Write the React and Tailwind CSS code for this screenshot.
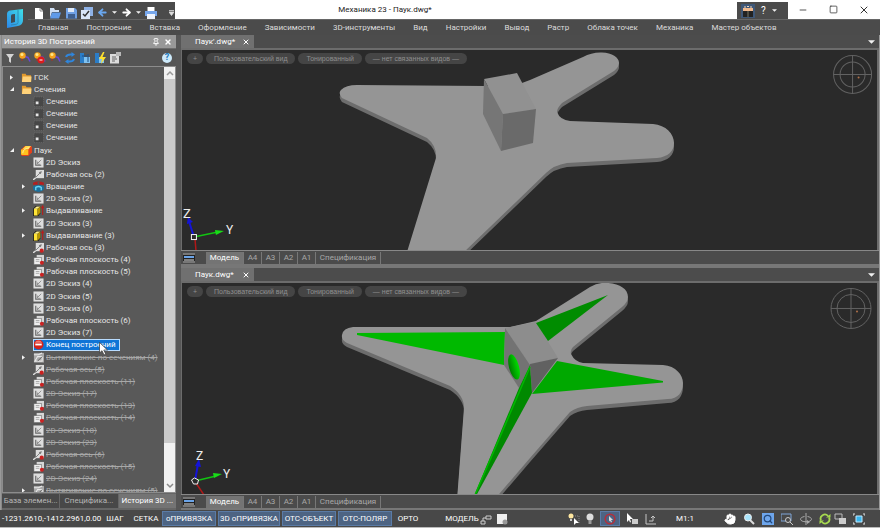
import { ArrowLeft, ArrowRight, Hand, Minus, Pin, Search, Square, X } from 'lucide-react'

const MENU = [
  'Главная', 'Построение', 'Вставка', 'Оформление', 'Зависимости', '3D-инструменты', 'Вид',
  'Настройки', 'Вывод', 'Растр', 'Облака точек', 'Механика', 'Мастер объектов',
]

const TREE = [
  { icon: 'folder', label: 'ГСК', level: 0, arrow: 'closed' },
  { icon: 'folder', label: 'Сечения', level: 0, arrow: 'open' },
  { icon: 'section', label: 'Сечение' },
  { icon: 'section', label: 'Сечение' },
  { icon: 'section', label: 'Сечение' },
  { icon: 'section', label: 'Сечение' },
  { icon: 'part', label: 'Паук', level: 0, arrow: 'open' },
  { icon: 'sketch', label: '2D Эскиз' },
  { icon: 'axis', label: 'Рабочая ось (2)' },
  { icon: 'revolve', label: 'Вращение', arrow: 'closed' },
  { icon: 'sketch', label: '2D Эскиз (2)' },
  { icon: 'extrude', label: 'Выдавливание', arrow: 'closed' },
  { icon: 'sketch', label: '2D Эскиз (3)' },
  { icon: 'extrude', label: 'Выдавливание (3)', arrow: 'closed' },
  { icon: 'axisRed', label: 'Рабочая ось (3)' },
  { icon: 'plane', label: 'Рабочая плоскость (4)' },
  { icon: 'plane', label: 'Рабочая плоскость (5)' },
  { icon: 'sketch', label: '2D Эскиз (4)' },
  { icon: 'sketch', label: '2D Эскиз (5)' },
  { icon: 'sketch', label: '2D Эскиз (6)' },
  { icon: 'plane', label: 'Рабочая плоскость (6)' },
  { icon: 'sketch', label: '2D Эскиз (7)' },
  { icon: 'stop', label: 'Конец построений', selected: true },
  { icon: 'loft', label: 'Вытягивание по сечениям (4)', arrow: 'closed', off: true },
  { icon: 'axisRed', label: 'Рабочая ось (5)', off: true },
  { icon: 'plane', label: 'Рабочая плоскость (11)', off: true },
  { icon: 'sketch', label: '2D Эскиз (17)', off: true },
  { icon: 'plane', label: 'Рабочая плоскость (13)', off: true },
  { icon: 'plane', label: 'Рабочая плоскость (14)', off: true },
  { icon: 'sketch', label: '2D Эскиз (18)', off: true },
  { icon: 'sketch', label: '2D Эскиз (23)', off: true },
  { icon: 'axisRed', label: 'Рабочая ось (6)', off: true },
  { icon: 'plane', label: 'Рабочая плоскость (15)', off: true },
  { icon: 'sketch', label: '2D Эскиз (24)', off: true },
  { icon: 'loft', label: 'Вытягивание по сечениям (5)', arrow: 'closed', off: true },
]

const SHEETS = [
  { name: 'Модель', width: 'w-[38px] bg-[#747474] text-white' },
  { name: 'A4', width: 'w-[18px]' },
  { name: 'A3', width: 'w-[18px]' },
  { name: 'A2', width: 'w-[18px]' },
  { name: 'A1', width: 'w-[18px]' },
  { name: 'Спецификация', width: 'w-[65px]' },
]

const MODES = [
  { name: 'оПРИВЯЗКА', width: 'w-[54px]' },
  { name: '3D оПРИВЯЗКА', width: 'w-[62px]' },
  { name: 'ОТС-ОБЪЕКТ', width: 'w-[54px]' },
  { name: 'ОТС-ПОЛЯР', width: 'w-[54px]' },
]

function Svg({ children, className = 'w-3 h-3', box = '0 0 12 12' }) {
  return <svg viewBox={box} className={`${className} shrink-0`} fill="none">{children}</svg>
}

function TreeIcon({ name }) {
  const cls = 'w-[11px] h-[11px]'
  switch (name) {
    case 'folder':
      return (
        <Svg className={cls}>
          <path d="M1 2h4l1 1.5h5V11H1z" fill="#e39a2d" />
          <path d="M2 5h9.5L11 11H1z" fill="#ffd27a" />
        </Svg>
      )
    case 'section':
      return (
        <Svg className={cls}>
          <rect x="1" y="1" width="10.5" height="10.5" fill="#474747" stroke="#777" strokeDasharray="1.5 1" strokeWidth=".6" />
          <rect x="3" y="6" width="3" height="3" fill="#e6e6e6" />
        </Svg>
      )
    case 'part':
      return (
        <Svg className={cls}>
          <path d="M0 5l4-4h7l1 1v6l-4 4H1l-1-1z" fill="#e2401c" />
          <path d="M1 5l4-4h6L8 5z" fill="#ffd84a" />
          <path d="M0 5h8v6H1l-1-1z" fill="#ffc21e" />
          <path d="M2 9c0-4 3-5 7-6" stroke="#fff3a0" />
        </Svg>
      )
    case 'axis':
    case 'axisRed':
      return (
        <Svg className={cls}>
          <path d="M3 1h9v9H3z" fill="#ddd" />
          <path d="M2 10l7-7M9 3L6.500 4M9 3l-1 2.500" stroke="#777" />
          <path d="M0 12l3-2.500" stroke="#ddd" strokeWidth="1.500" />
          {name === 'axisRed' && <circle cx="9.500" cy="9.500" r="2.300" fill="#c92020" />}
        </Svg>
      )
    case 'plane':
      return (
        <Svg className={cls}>
          <rect x="4" y="1" width="8" height="7" fill="#d6d6d6" />
          <rect x="1" y="4" width="8" height="7.500" fill="#eee" stroke="#666" strokeWidth=".6" />
          <path d="M3 6h4M3 8h4" stroke="#888" strokeWidth=".7" />
          <circle cx="9.700" cy="9.500" r="2.200" fill="#cc2222" />
        </Svg>
      )
    case 'sketch':
      return (
        <Svg className={cls}>
          <rect x=".5" y=".5" width="11" height="11" fill="#dedede" />
          <path d="M3 3v6h6" stroke="#6a6a6a" strokeWidth="1.300" />
          <path d="M4 8l5-5M5 5v3h3" stroke="#8a8a8a" />
        </Svg>
      )
    case 'revolve':
      return (
        <Svg className={cls}>
          <path d="M0 2q6-3 12 0v2H0z" fill="#b51f1f" />
          <path d="M0 6q6-4 12 0v3q-2 3-6 3T0 9z" fill="#1b6f9b" />
          <path d="M3 10V7q3-2 6 0v3" stroke="#66d4f2" strokeWidth="1.500" />
          <rect x="5" y="1" width="2" height="3" fill="#555" />
        </Svg>
      )
    case 'extrude':
      return (
        <Svg className={cls}>
          <path d="M0 4l3-3h5v8l-2 3H0z" fill="#1e1e1e" />
          <path d="M1 4h4v7.500H1z" fill="#ffe437" />
          <path d="M1 4l3-2.500h4L5 4z" fill="#fff08a" />
          <path d="M5 4l3-2.500v7L5 11.500z" fill="#b89600" />
          <path d="M10.500 11V2M9 3.500L10.500 1 12 3.500" stroke="#b32020" strokeWidth="1.200" />
        </Svg>
      )
    case 'stop':
      return (
        <Svg className={cls}>
          <circle cx="6" cy="6" r="5.500" fill="#d3231b" />
          <path d="M2 4a4.500 4.500 0 018 0z" fill="#f0786e" />
          <rect x="2.500" y="5" width="7" height="2" fill="#fff" />
        </Svg>
      )
    default:
      return (
        <Svg className={cls}>
          <rect x="1" y="1" width="11" height="10.500" fill="#a9a9a9" />
          <path d="M1 3h5l4-2M2 10l3-5h5v5z" stroke="#e8e8e8" strokeWidth="1.200" />
          <path d="M5 10l5-5" stroke="#555" />
        </Svg>
      )
  }
}

function Caret({ className = 'w-[7px] h-1' }) {
  return <Svg box="0 0 8 4" className={className}><path d="M0 0h8L4 4z" fill="#f0f0f0" /></Svg>
}

function Logo() {
  return (
    <Svg box="0 0 18 21" className="w-[18px] h-[21px]">
      <defs>
        <linearGradient id="logo" x1="0" y1="1" x2="1" y2="0">
          <stop offset="0" stopColor="#2b86ea" />
          <stop offset="1" stopColor="#3fe0e6" />
        </linearGradient>
      </defs>
      <path d="M1 6q0-3 3-3.500L17 1v11q0 5-5 6L1 20z" fill="url(#logo)" />
      <path d="M5 8q0-1.500 1.500-1.700L9 6v8l-4 1z" fill="#3f4c55" />
      <path d="M12 2v12.500q0 1.500-2 1.800L5 17" stroke="#2f7fa8" strokeWidth=".8" />
    </Svg>
  )
}

function QuickAccess() {
  return (
    <div className="mt-0.5 flex h-[17px] w-[147px] items-center gap-1 bg-[#4b4b4b] pl-[5px] pt-1">
      <button aria-label="Новый"><Svg><path d="M2 1h5l3 3v8H2z" fill="#fff" /><path d="M7 1v3h3" stroke="#888" /></Svg></button>
      <button aria-label="Открыть"><Svg><path d="M1 1h4l1 2h4v2H3l-2 6z" fill="#cfe0f5" /><path d="M3 5.500h9L10 11.500H1z" fill="#5f9bea" /></Svg></button>
      <button aria-label="Сохранить"><Svg><path d="M1 1h9l2 2v8.500H1z" fill="#6fa0e4" /><path d="M3 1h6v4H3z" fill="#dfe9f7" /><path d="M3 7h7v4.500H3z" fill="#3f5f8d" /></Svg></button>
      <button aria-label="Сохранить все"><Svg><path d="M3 0h9v9H3z" fill="#8fb2e6" /><path d="M0 3h9v9H0z" fill="#d9e6f8" /><path d="M2 7l2 2 4-5" stroke="#333" strokeWidth="1.500" /></Svg></button>
      <button aria-label="Отменить"><ArrowLeft className="h-[11px] w-[11px] text-[#6aa7ef]" strokeWidth={4} /></button>
      <Caret className="h-[3px] w-[5px]" />
      <button aria-label="Повторить"><ArrowRight className="h-[11px] w-[11px] text-white" strokeWidth={4} /></button>
      <Caret className="h-[3px] w-[5px]" />
      <button aria-label="Печать"><Svg><path d="M2.500 0h7v4h-7z" fill="#fff" /><path d="M0 4h12v5H0z" fill="#77a7ec" /><path d="M2 7h8v5H2z" fill="#eef3fb" /></Svg></button>
      <button aria-label="Настроить панель" className="ml-auto mr-px"><Svg box="0 0 5 6" className="h-1.5 w-[5px]"><path d="M0 .5h5M0 2h5L2.500 5.500z" stroke="#ddd" strokeWidth=".8" fill="#ddd" /></Svg></button>
    </div>
  )
}

function Header() {
  return (
    <header className="flex h-[35px] shrink-0 bg-[#4b4b4b]">
      <div className="flex w-[28px] shrink-0 items-center border-t-2 border-white pl-1.5"><Logo /></div>
      <div className="flex min-w-0 flex-1 flex-col">
        <div className="flex h-[19px] bg-white">
          <QuickAccess />
          <h1 className="flex-1 pr-[142px] pt-1 text-center text-[8px] leading-3 text-[#222]">Механика 23 - Паук.dwg*</h1>
          <div className="mt-0.5 flex h-[17px] w-[51px] items-center gap-1.5 bg-[#4b4b4b] pl-1">
            <button aria-label="Каталог" className="bg-[#3f5878] p-px">
              <Svg><path d="M1 3h10v3H1z" fill="#f0b98d" /><path d="M2 2h2M5 1.500h2M8 2h2" stroke="#f7d8be" /><path d="M1 6h10v6H1z" fill="#222" /><path d="M6 6v6" stroke="#776" /></Svg>
            </button>
            <button className="text-[10px] leading-3 text-white">?</button>
            <Caret className="h-[3px] w-[5px]" />
          </div>
          <div className="flex w-[92px] items-center justify-between px-2.5 text-[#333]">
            <button aria-label="Свернуть"><Minus className="h-2.5 w-2.5" strokeWidth={2} /></button>
            <button aria-label="Развернуть"><Square className="h-[9px] w-[9px]" strokeWidth={2} /></button>
            <button aria-label="Закрыть"><X className="h-3 w-3" strokeWidth={2} /></button>
          </div>
        </div>
        <nav className="flex flex-1 items-center gap-[18px] whitespace-nowrap border-t border-[#666] pl-[10px] text-[8px] leading-3 text-[#dcdcdc]">
          {MENU.map((m) => <button key={m}>{m}</button>)}
        </nav>
      </div>
    </header>
  )
}

function HistoryToolbar() {
  const node = (
    <>
      <path d="M4 4l5 1.500 2 4" stroke="#6848d8" strokeWidth="1.500" />
      <path d="M3 4v5" stroke="#b03020" />
      <circle cx="3.500" cy="3.500" r="3.200" fill="#f5a21b" />
      <circle cx="3" cy="2.500" r="1.500" fill="#ffe78a" />
    </>
  )
  return (
    <div className="flex h-[18px] shrink-0 items-center gap-[3px] border-t border-[#6c6c6c] bg-[#555] px-0.5">
      <button aria-label="Фильтр"><Svg><path d="M2 2h8L7 6v5L5 9.500V6z" fill="#d4d4d4" /></Svg></button>
      <button aria-label="Узел"><Svg>{node}</Svg></button>
      <button aria-label="Удалить узел"><Svg>{node}<circle cx="7" cy="8" r="3.500" fill="#dc1c1c" /><path d="M5.500 8h3" stroke="#fff" /></Svg></button>
      <button aria-label="Связи"><Svg>{node}</Svg></button>
      <button aria-label="Обновить">
        <Svg><path d="M2 5q1-3 6-2.500M10 7q-1 3-6 2.500" stroke="#2f86dd" strokeWidth="2" /><path d="M7.500 0L11 2.500 7.500 5zM4.500 7L1 9.500 4.500 12z" fill="#2f86dd" /></Svg>
      </button>
      <button aria-label="Структура"><Svg><path d="M1 1h4v10H1z" fill="#2b7dc7" /><path d="M5 5h6v6H5z" fill="#7fc1ef" /><path d="M9 2v8M3 4h5" stroke="#1c4f87" /></Svg></button>
      <button aria-label="Пересчитать"><Svg><path d="M1 1h4v10H1z" fill="#2b7dc7" /><path d="M5 5h5v6H5z" fill="#7fc1ef" /><path d="M9 0L5 7h3l-1 5 5-7H8.500l2-5z" fill="#ffe12e" /></Svg></button>
      <button aria-label="Свойства"><Svg><path d="M1 2h9v9.500H1z" fill="#ddd" /><path d="M3 5h4M3 7h5M3 9h3" stroke="#666" /><path d="M7 0h5v4H7z" fill="#b9b9b9" /></Svg></button>
      <button aria-label="Справка" className="ml-auto mr-0.5 flex h-[10px] w-[10px] items-center justify-center rounded-full bg-[#cdeafb] text-[9px] font-bold leading-none text-[#1f78b8]">?</button>
    </div>
  )
}

function TreeRow({ item }) {
  const top = item.level === 0
  return (
    <li className={`flex min-h-0 items-center ${top ? 'pl-[7px]' : 'pl-[19px]'}`}>
      <span className="flex w-[11px] shrink-0 items-center">
        {item.arrow === 'closed' && <Svg className="h-[5px] w-[3px]" box="0 0 4 6"><path d="M0 0l4 3-4 3z" fill="#f2f2f2" /></Svg>}
        {item.arrow === 'open' && <Svg className="h-1 w-1" box="0 0 4 4"><path d="M4 0v4H0z" fill="#f2f2f2" /></Svg>}
      </span>
      <button
        className={`flex h-3 items-center gap-0.5 whitespace-nowrap text-[8px] leading-[11px] ${
          item.selected ? 'bg-[#0f74d6] pr-1 text-white outline outline-1 -outline-offset-1 outline-[#b9dcff]' : item.off ? 'text-[#a8a8a8] line-through' : 'text-[#e6e6e6]'
        }`}
      >
        <TreeIcon name={item.icon} />
        <span>{item.label}</span>
      </button>
    </li>
  )
}

function HistoryPanel() {
  return (
    <aside className="flex w-[175px] shrink-0 flex-col border-l border-[#888] bg-[#595959]">
      <div className="flex h-[13px] shrink-0 items-center bg-[#989898] pl-0.5 pr-1 text-white">
        <h2 className="flex-1 text-[8px] leading-3">История 3D Построений</h2>
        <button aria-label="Закрепить"><Pin className="mr-1 h-2 w-2" strokeWidth={3} /></button>
        <button aria-label="Закрыть панель"><X className="h-2 w-2" strokeWidth={4} /></button>
      </div>
      <HistoryToolbar />
      <div className="flex min-h-0 flex-1 overflow-hidden border border-[#8c8c8c]">
        <ul className="-mb-[5px] grid min-w-0 flex-1 auto-rows-fr pt-1">
          {TREE.map((item, i) => <TreeRow key={i} item={item} />)}
        </ul>
        <div className="flex w-[11px] shrink-0 flex-col bg-[#f1f1f1]">
          <button aria-label="Вверх" className="flex h-3 items-center justify-center"><Svg className="h-1.5 w-2" box="0 0 8 6"><path d="M1 5l3-3 3 3" stroke="#999" strokeWidth="1.500" /></Svg></button>
          <div className="flex-[15] bg-[#cacaca]" />
          <div className="flex flex-[2] flex-col justify-end">
            <button aria-label="Вниз" className="flex h-3 items-center justify-center"><Svg className="h-1.5 w-2" box="0 0 8 6"><path d="M1 1l3 3 3-3" stroke="#888" strokeWidth="1.500" /></Svg></button>
          </div>
        </div>
      </div>
      <div className="flex h-[17px] shrink-0 items-stretch border-b-2 border-t border-[#666] bg-[#484848] text-[8px] leading-3 text-[#b5b5b5]">
        <button className="flex-1 whitespace-nowrap border-r border-[#666]">База элемен...</button>
        <button className="flex-1 whitespace-nowrap border-r border-[#666]">Специфика...</button>
        <button className="flex-1 whitespace-nowrap bg-[#747474] text-white">История 3D ...</button>
      </div>
    </aside>
  )
}

function Compass({ cx, cy, r, inner }) {
  return (
    <g stroke="#626262" strokeWidth="1" fill="none">
      <circle cx={cx} cy={cy} r={r} />
      <circle cx={cx} cy={cy} r={inner} />
      <path d={`M${cx - r} ${cy}h${r * 2}M${cx} ${cy - r}v${r * 2}`} />
      <circle cx={cx + 6} cy={cy + 3} r="1" fill="#b0714a" stroke="none" />
    </g>
  )
}

const PLATE_A = 'M407 252L436 158Q437 146 427 138L342 98Q338 93 341 90Q346 85 357 85L485 86L522 83L530 80L583 57Q592 52 602 52.500C612 53 619 57 619 63Q619 67 614 71L562 103Q557 108 557 112Q560 120 570 121L653 124C666 125 674 134 674 143C674 151 668 157 657 158L567 163Q554 165 546 173L464 252z'
const PLATE_B = 'M457 500L464 408Q464 395 450 386L347 343Q341 340 342 335Q343 328 353 327L510 327L536 321L590 287Q599 282 608 283C620 284 628 289 628 297Q628 302 622 307L573 347Q570 350 571 354Q575 362 583 363L663 365C676 366 683 375 683 383C683 392 678 399 668 399L587 406Q577 407 570 412L530 458L494 500z'

function SceneTop() {
  return (
    <svg viewBox="182 50 695 200" preserveAspectRatio="xMidYMid slice" className="absolute inset-0 h-full w-full">
      <path d={PLATE_A} fill="#6d6d6d" transform="translate(0 4)" />
      <path d={PLATE_A} fill="#959595" />
      <path d="M484 79l33-6 19 36-33 5z" fill="#919191" />
      <path d="M484 79l19 35-2 37-18-37z" fill="#767676" />
      <path d="M503 114l33-5-3 34-32 8z" fill="#6a6a6a" />
      <path d="M194 237l-5-16" stroke="#1414d8" strokeWidth="2" />
      <path d="M187 224l1-7 5 5z" fill="#1414d8" />
      <path d="M194 237l24-5" stroke="#12c412" strokeWidth="1.500" />
      <path d="M215 230l9 1-8 4z" fill="#18dc18" />
      <path d="M195 238l1 12" stroke="#b01818" strokeWidth="1.500" />
      <rect x="191.500" y="234.500" width="5" height="5" fill="#2a2a2a" stroke="#f2f2f2" />
      <text x="183" y="218" fontSize="13" fill="#eee">Z</text>
      <text x="226" y="234" fontSize="12" fill="#eee">Y</text>
      <Compass cx={852.5} cy={74.5} r={19} inner={12.5} />
    </svg>
  )
}

function SceneBottom() {
  return (
    <svg viewBox="182 283 695 211" preserveAspectRatio="xMidYMid slice" className="absolute inset-0 h-full w-full">
      <defs>
        <linearGradient id="hole"><stop offset="0" stopColor="#007a00" /><stop offset="1" stopColor="#00e000" /></linearGradient>
      </defs>
      <path d={PLATE_B} fill="#6d6d6d" transform="translate(0 4)" />
      <path d={PLATE_B} fill="#959595" />
      <path d="M357 333l148-1-1 33-147-30z" fill="#00b900" />
      <path d="M505 328l31-6 22 36-28 7z" fill="#8d8d8d" />
      <path d="M505 328l25 37-11 23-15-23z" fill="#737373" />
      <path d="M530 364l28-6-26 35z" fill="#616161" />
      <ellipse cx="514" cy="367" rx="5" ry="13" transform="rotate(-15 514 367)" fill="url(#hole)" />
      <path d="M536 323l72-28-60 46z" fill="#008c00" />
      <path d="M557 361l106 20v1.500L532 394z" fill="#00a800" />
      <path d="M530 365l2 28-56 103h-2l45-108z" fill="#008900" />
      <path d="M530 367l-55 128" stroke="#00b800" strokeWidth="1.500" />
      <path d="M195 481l3-17" stroke="#1414d8" strokeWidth="2" />
      <path d="M195 466l4-7 2 8z" fill="#1414d8" />
      <path d="M195 481l21-5" stroke="#12c412" strokeWidth="1.500" />
      <path d="M213 473l9 1-8 4z" fill="#18dc18" />
      <path d="M196 483l8 12" stroke="#b01818" strokeWidth="1.500" />
      <path d="M191.500 480l3-2 4 2-1 4h-4z" fill="#2a2a2a" stroke="#f2f2f2" />
      <text x="196" y="460" fontSize="12" fill="#eee">Z</text>
      <text x="223" y="478" fontSize="12" fill="#eee">Y</text>
      <Compass cx={851} cy={308.5} r={20} inner={14} />
    </svg>
  )
}

function ViewWindow({ title, className, children }) {
  const pill = 'h-[11px] rounded-full bg-[#454545] px-2 whitespace-nowrap'
  return (
    <section className={`flex min-h-0 flex-col ${className}`}>
      <div className="flex h-[13px] shrink-0 items-center justify-between bg-[#4c4c4c] pr-1">
        <div className="flex h-full w-[73px] items-center justify-between bg-[#707070] pl-3.5 pr-1 text-[8px] leading-3 text-white">
          <button>{title}</button>
          <button aria-label="Закрыть документ"><X className="h-2 w-2" strokeWidth={3} /></button>
        </div>
        <button aria-label="Список документов"><Caret /></button>
      </div>
      <div className="relative min-h-0 flex-1 overflow-hidden border-l border-r-2 border-t-2 border-[#6c6c6c] bg-[#2a2a2a]">
        {children}
        <div className="relative flex gap-[3px] pl-[5px] pt-[3px] font-['Liberation_Sans',sans-serif] text-[7px] leading-[11px] text-[#8f8f8f]">
          <button className="h-[11px] w-4 rounded-full bg-[#454545]">+</button>
          <button className={pill}>Пользовательский вид</button>
          <button className={pill}>Тонированный</button>
          <button className={pill}>— нет связанных видов —</button>
        </div>
      </div>
      <div className="flex h-[14px] shrink-0 items-center border-t border-[#888] bg-[#4b4b4b] text-[8px] leading-3 text-[#a8a8a8]">
        <button aria-label="Листы" className="ml-0.5 mr-[11px]"><Svg><path d="M0 1h12v10H0z" fill="#222" /><path d="M0 2h12M0 10h12" stroke="#ccc" /><path d="M1 5h10" stroke="#6ba4e8" strokeWidth="2" /><path d="M1 8h10" stroke="#ddd" /></Svg></button>
        {SHEETS.map((s) => (
          <button key={s.name} className={`h-3 whitespace-nowrap border-r border-[#777] ${s.width}`}>{s.name}</button>
        ))}
      </div>
    </section>
  )
}

function StatusBar() {
  return (
    <footer className="flex h-[18px] shrink-0 items-center whitespace-nowrap border-b border-[#bbb] bg-[#484848] text-[8px] leading-3 text-white">
      <span className="w-[100px] pl-0.5">-1231.2610,-1412.2961,0.00</span>
      <button className="w-[30px]">ШАГ</button>
      <button className="w-8">СЕТКА</button>
      <div className="flex gap-0.5">
        {MODES.map((m) => <button key={m.name} className={`h-[15px] border border-[#5a7ba6] bg-[#4d6483] ${m.width}`}>{m.name}</button>)}
      </div>
      <button className="w-8">ОРТО</button>
      <button className="ml-5 w-9">МОДЕЛЬ</button>
      <div className="flex items-center gap-1">
        <Svg><path d="M1 8h4v3H1zM6 3h5v3H6zM3 8V5h3" stroke="#ccc" /></Svg>
        <Svg><path d="M1 1h10v10H1z" fill="#eee" /><circle cx="9" cy="9" r="2.500" fill="#999" /></Svg>
      </div>
      <div className="ml-auto flex items-center gap-1.5">
        <button aria-label="Подсветка"><Svg><circle cx="3" cy="3" r="2.500" fill="#ffe7a0" /><path d="M2 6h2v2H2z" fill="#ccc" /><path d="M7 3h4v8" stroke="#888" strokeDasharray="1 1" /><path d="M6 5l5 5H8l-2 2z" fill="#fff" /></Svg></button>
        <button aria-label="Лампа"><Svg className="h-3 w-2" box="0 0 8 12"><circle cx="4" cy="4" r="3.500" fill="#ddd" /><path d="M2.500 7h3v4h-3z" fill="#999" /></Svg></button>
        <button aria-label="Выбор" className="flex h-[15px] w-5 items-center justify-center border border-[#5a7ba6] bg-[#4d6483]"><Svg><circle cx="6" cy="6" r="4.800" stroke="#b52e3a" strokeWidth="1.500" /><path d="M5 3l4 4H7l1 2-1 .5L6 7.500 5 8.500z" fill="#ddd" /></Svg></button>
        <button aria-label="Курсор"><Svg><path d="M1 0l6 6H4l1 3-1 .5L3 7 1 9z" fill="#fff" /><path d="M6 6h6v5H6z" fill="#ccc" /></Svg></button>
        <button aria-label="ПСК"><Svg><path d="M2 1v10h10M5 8h4V3M7 5l2-2 2 2" stroke="#c5c5c5" /></Svg></button>
      </div>
      <button className="ml-5 mr-[30px]">М1:1</button>
      <div className="flex items-center gap-[7px] pr-[15px]">
        <button aria-label="Панорама"><Hand className="h-3 w-3 fill-white text-white" /></button>
        <button aria-label="Масштаб"><Svg><path d="M7 7l4 4" stroke="#ddd" strokeWidth="2" /><circle cx="5" cy="4.500" r="3.500" fill="#a9e4fb" stroke="#eee" /></Svg></button>
        <button aria-label="Масштаб окна"><Search className="h-3 w-3 bg-[#6ea6ec] p-px text-[#234a7e]" strokeWidth={3} /></button>
        <button aria-label="Показать все"><Svg><path d="M0 1h10v7H0z" stroke="#7fa5d8" /><circle cx="7" cy="7" r="2.500" fill="#484848" stroke="#ccc" /><path d="M9 9l3 3" stroke="#ccc" /></Svg></button>
        <button aria-label="Орбита"><Svg><path d="M6 0v12" stroke="#aaa" /><path d="M4.500 3.500C2 4 .5 5 .5 6.200c0 1.500 2.500 2.600 5.500 2.600s5.500-1.100 5.500-2.600c0-1.200-1.500-2.200-4-2.700" stroke="#aaa" /><path d="M7 7l3 2-3 2z" fill="#aaa" /></Svg></button>
        <button aria-label="Регенерация"><Svg><path d="M2 7.500a4.200 4.200 0 017-4.500M10 4.500a4.200 4.200 0 01-7 4.500" stroke="#a6d94f" strokeWidth="1.800" /><path d="M7 4.500h4.500V1zM5 7.500H.5V11z" fill="#a6d94f" /></Svg></button>
        <button aria-label="Окна" className="-ml-1"><Svg><path d="M1 1h7v5H1z" stroke="#bbb" /><path d="M5 5h7v6H5z" fill="#ccc" /></Svg></button>
        <button aria-label="Во весь экран"><Svg><path d="M3 3h6v6H3z" fill="#38b5ee" stroke="#bfe9ff" /><path d="M0 3V1h2M10 1h2v2M12 9v2h-2M2 11H0V9" stroke="#ddd" /></Svg></button>
      </div>
    </footer>
  )
}

export default function App() {
  return (
    <div className="flex h-screen min-h-[528px] flex-col overflow-hidden bg-[#4b4b4b] font-['Roboto','Noto_Sans',sans-serif]">
      <Header />
      <main className="flex min-h-0 flex-1 gap-[5px] border-x border-[#9a9a9a] bg-[#565656]">
        <HistoryPanel />
        <div className="flex min-w-0 flex-1 flex-col gap-1 bg-[#777] pb-0.5">
          <ViewWindow title="Паук'.dwg*" className="flex-[21]"><SceneTop /></ViewWindow>
          <ViewWindow title="Паук.dwg*" className="flex-[22]"><SceneBottom /></ViewWindow>
        </div>
      </main>
      <StatusBar />
      <svg viewBox="0 0 10 14" className="pointer-events-none absolute left-[99px] top-[342px] h-3.5 w-2.5">
        <path d="M.5.5v10.500l2.500-2.300 2 4.300 1.800-.8-2-4.200H8.500z" fill="#fff" stroke="#333" strokeWidth=".7" />
      </svg>
    </div>
  )
}
